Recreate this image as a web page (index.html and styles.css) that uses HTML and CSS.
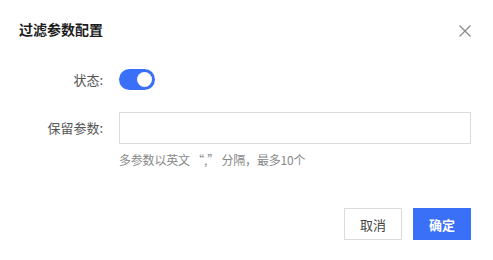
FILE: index.html
```html
<!DOCTYPE html>
<html lang="zh">
<head>
<meta charset="utf-8">
<link rel="stylesheet" href="styles.css">
</head>
<body>
<div class="dialog">
  <div class="header">
    <div class="title">过滤参数配置</div>
    <button class="close" aria-label="关闭">
      <svg width="12" height="12" viewBox="0 0 12 12"><path d="M0.5 0.5 L11.5 11.5 M11.5 0.5 L0.5 11.5" stroke="#8a8a8a" stroke-width="1.3" fill="none"/></svg>
    </button>
  </div>
  <div class="form">
    <div class="label status-label">状态:</div>
    <div class="control"><span class="switch on"><span class="knob"></span></span></div>
    <div class="label input-label">保留参数:</div>
    <div class="control">
      <input class="input" type="text">
      <div class="hint">多参数以英文 “,” 分隔，最多10个</div>
    </div>
  </div>
  <div class="footer">
    <button class="btn btn-default">取消</button>
    <button class="btn btn-primary">确定</button>
  </div>
</div>
</body>
</html>
```

FILE: styles.css
```css
* { box-sizing: border-box; }
html, body { margin: 0; padding: 0; background: #fff; }
body {
  font-family: "Noto Sans CJK SC", "Noto Sans", sans-serif;
  color: #333;
}
.dialog {
  width: 493px;
  height: 260px;
  padding: 19px 22px 0 19px;
}
.header {
  display: flex;
  justify-content: space-between;
  align-items: flex-start;
  height: 20px;
}
.title {
  font-size: 14px;
  line-height: 20px;
  font-weight: 700;
  color: #1d1d1d;
}
.close {
  border: 0;
  background: none;
  padding: 0;
  margin-top: 6px;
  width: 12px;
  height: 12px;
  display: block;
}
.close svg { display: block; }
.form {
  display: grid;
  grid-template-columns: 84px 1fr;
  column-gap: 16px;
  row-gap: 22px;
  margin-top: 30px;
}
.label {
  text-align: right;
  font-size: 13px;
  color: #555;
  line-height: 21px;
}
.input-label { line-height: 32px; }
.switch {
  display: block;
  width: 36px;
  height: 21px;
  border-radius: 11px;
  background: #3a6ff7;
  position: relative;
}
.switch .knob {
  position: absolute;
  top: 3px;
  right: 3px;
  width: 15px;
  height: 15px;
  border-radius: 50%;
  background: #fff;
}
.input {
  display: block;
  width: 352px;
  height: 32px;
  border: 1px solid #dcdcdc;
  border-radius: 0;
  outline: none;
  margin: 0;
}
.hint {
  margin-top: 7px;
  font-size: 12px;
  line-height: 18px;
  color: #888;
  letter-spacing: -0.2px;
}
.footer {
  display: flex;
  justify-content: flex-end;
  gap: 11px;
  margin-top: 39px;
}
.btn {
  height: 32px;
  width: 58px;
  font-family: inherit;
  font-size: 13px;
  border-radius: 0;
  padding: 0;
  cursor: pointer;
}
.btn-default {
  background: #fff;
  border: 1px solid #dcdcdc;
  color: #444;
}
.btn-primary {
  background: #3a6ff7;
  border: 1px solid #3a6ff7;
  color: #fff;
  font-weight: 700;
}
```
